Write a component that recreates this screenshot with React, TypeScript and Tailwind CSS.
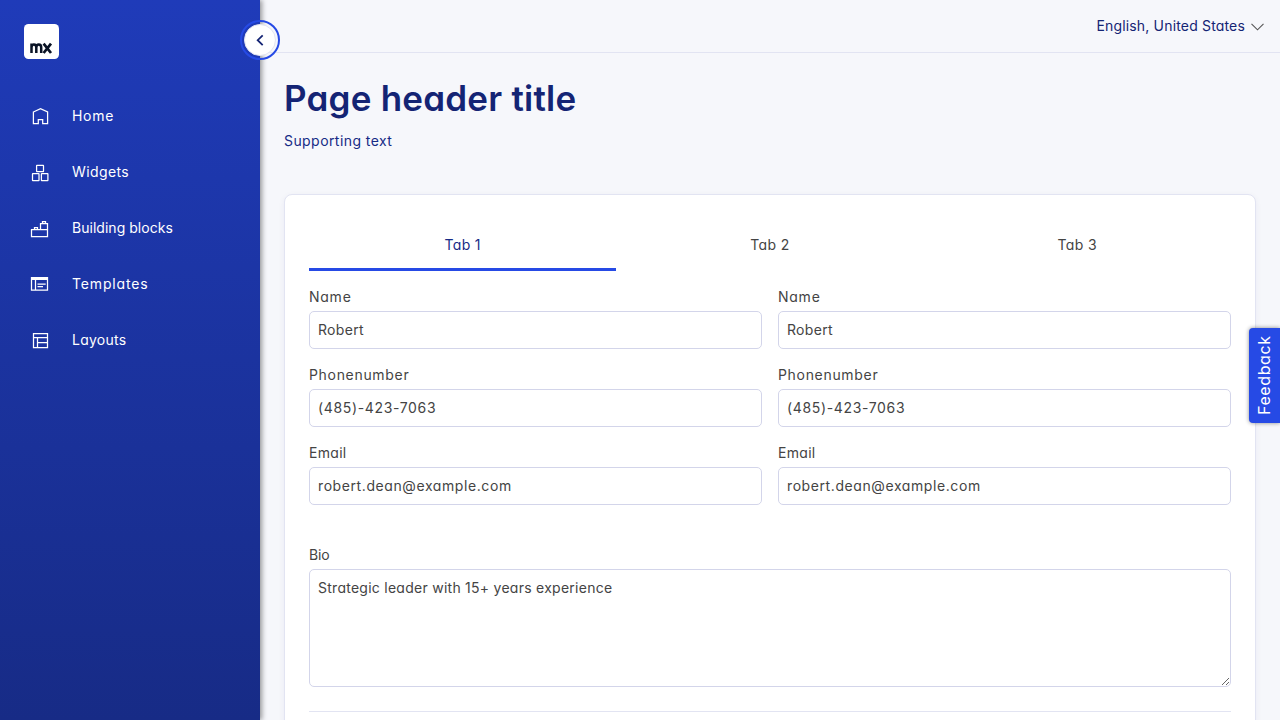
import type { ReactNode } from "react";

function Icon({ children }: { children: ReactNode }) {
  return (
    <svg className="h-6 w-6 shrink-0" viewBox="0 0 24 24" fill="none" stroke="currentColor" strokeWidth="1.25">
      {children}
    </svg>
  );
}

const navItems: { label: string; tracking: string; icon: ReactNode }[] = [
  {
    label: "Home",
    tracking: "tracking-[0.7px]",
    icon: <path d="M5.4 8 12.5 4.7 19.6 8v11.5h-4.9v-4h-4.4v4H5.4z" />,
  },
  {
    label: "Widgets",
    tracking: "tracking-[0.4px]",
    icon: (
      <>
        <rect x="8.6" y="5.4" width="6.9" height="6.2" rx="0.3" />
        <rect x="4.5" y="13.6" width="6.5" height="6.9" rx="0.3" />
        <rect x="13.4" y="13.6" width="6.5" height="6.9" rx="0.3" />
      </>
    ),
  },
  {
    label: "Building blocks",
    tracking: "tracking-[0.03px]",
    icon: (
      <>
        <path d="M3.5 13.5h16v7h-16z" />
        <path d="M6.5 13.5v-2h3v2" />
        <path d="M12.5 13.5v-6h7v6" />
        <path d="M14.5 7.5v-2h3v2" />
      </>
    ),
  },
  {
    label: "Templates",
    tracking: "tracking-[0.85px]",
    icon: (
      <>
        <path d="M3.5 5.5h16v12.5h-16z" />
        <path d="M3 5h17v3H3z" fill="currentColor" stroke="none" />
        <path d="M7.5 8v10M9.5 12h8.2M9.5 14.6h5.5" />
      </>
    ),
  },
  {
    label: "Layouts",
    tracking: "tracking-[0.25px]",
    icon: <path d="M5.5 5.5h14v14h-14zM5.5 9.5h14M9.5 9.5v10M9.5 14.5h10" />,
  },
];

const tabs = ["Tab 1", "Tab 2", "Tab 3"];

const fields = [
  { label: "Name", labelTracking: "tracking-[0.75px]", value: "Robert", tracking: "tracking-[0.3px]" },
  { label: "Phonenumber", labelTracking: "tracking-[0.68px]", value: "(485)-423-7063", tracking: "tracking-[0.65px]" },
  { label: "Email", labelTracking: "tracking-[0.3px]", value: "robert.dean@example.com", tracking: "tracking-[0.59px]" },
];

function Sidebar() {
  return (
    <aside className="relative z-10 flex w-[260px] shrink-0 flex-col bg-linear-to-b from-[#1f3bb9] to-[#172b86] text-white shadow-[2px_0_5px_rgba(0,0,0,0.4)]">
      <div className="px-6 pt-6">
        <svg className="h-[35px] w-[35px]" viewBox="0 0 35 35">
          <rect width="35" height="35" rx="4.5" fill="#fff" />
          <g fill="none" stroke="#0a1325" strokeWidth="2.5">
            <path d="M7.5 29v-9.4M7.5 29v-5.4c0-2 .9-3 2.4-3s2.4 1 2.4 2.8V29M12.3 29v-5.4c0-2 1-3 2.5-3s2.4 1 2.4 2.8V29" />
            <path d="m19.6 19.6 7.4 9.4M27 19.6 19.6 29" strokeWidth="2.7" />
          </g>
        </svg>
      </div>
      <nav className="mt-[29px] flex flex-col">
        {navItems.map((item) => (
          <a key={item.label} className="flex h-14 items-center gap-5 pl-7">
            <Icon>{item.icon}</Icon>
            <span className={item.tracking}>{item.label}</span>
          </a>
        ))}
      </nav>
      <button className="absolute top-6 -right-4 flex h-8 w-8 items-center justify-center rounded-full border border-[#e2e4f2] bg-white text-[#142474] outline-2 outline-offset-2 outline-[#264ae5]">
        <svg className="h-4 w-4" viewBox="0 0 16 16" fill="none" stroke="currentColor" strokeWidth="1.8">
          <path d="M10.7 3.3 5.7 8.2l5 4.9" />
        </svg>
      </button>
    </aside>
  );
}

export default function App() {
  return (
    <div className="relative flex h-screen overflow-hidden bg-[#f6f7fb] font-['Inter',sans-serif] text-sm font-[370] text-[#444] [font-feature-settings:'cv11']">
      <Sidebar />
      <div className="flex min-w-0 flex-1 flex-col">
        <header className="flex h-[53px] shrink-0 items-center justify-end gap-[6px] border-b border-[#e2e4f2] pr-4 text-[#142474]">
          <span className="tracking-[0.17px]">English, United States</span>
          <svg className="h-[13px] w-[13px]" viewBox="0 0 13 13" fill="none" stroke="#555" strokeWidth="1.1">
            <path d="m.5 3.8 6 6 6-6" />
          </svg>
        </header>
        <main className="flex flex-col px-6 pt-[22px]">
          <h1 className="-mt-px h-[49px] text-[35px] leading-[48px] font-semibold tracking-[0.22px] text-[#142474]">
            Page header title
          </h1>
          <p className="mt-2 leading-5 tracking-[0.43px] text-[#172b86]">Supporting text</p>
          <section className="mt-[43px] flex h-[600px] flex-col rounded-lg border border-[#e2e4f2] bg-white px-6 pt-6 shadow-[0_2px_6px_rgba(20,36,116,0.06)]">
            <div className="grid h-[52px] grid-cols-3">
              {tabs.map((tab, i) => (
                <button
                  key={tab}
                  className={
                    i === 0
                      ? "border-b-3 border-[#264ae5] pt-[2px] tracking-[0.3px] text-[#172b86]"
                      : "border-b-3 border-transparent pt-[2px] tracking-[0.4px]"
                  }
                >
                  {tab}
                </button>
              ))}
            </div>
            <div className="mt-4 grid grid-cols-2 gap-x-4">
              {fields.flatMap((field) =>
                [0, 1].map((column) => (
                  <label key={field.label + column} className="flex h-[78px] flex-col">
                    <span className={`leading-5 ${field.labelTracking}`}>{field.label}</span>
                    <input
                      className={`mt-1 h-[38px] rounded-[5px] border border-[#d3d5ea] bg-white px-2 pb-[2px] outline-none ${field.tracking}`}
                      defaultValue={field.value}
                    />
                  </label>
                )),
              )}
            </div>
            <label className="mt-6 flex flex-col">
              <span className="leading-5 tracking-[-0.2px]">Bio</span>
              <textarea
                className="mt-1 h-[118px] rounded-[5px] border border-[#d3d5ea] bg-white px-2 py-2 leading-5 tracking-[0.26px] outline-none"
                defaultValue="Strategic leader with 15+ years experience"
              />
            </label>
            <hr className="mt-6 border-[#e2e4f2]" />
          </section>
        </main>
      </div>
      <button className="absolute top-[328px] right-0 flex h-[95px] w-[31px] rotate-180 items-center justify-center rounded-r-[4px] bg-[#264ae5] pl-[2px] text-base tracking-[0.6px] text-white shadow-[0_0_4px_rgba(0,0,0,0.45)] [writing-mode:vertical-rl]">
        Feedback
      </button>
    </div>
  );
}
